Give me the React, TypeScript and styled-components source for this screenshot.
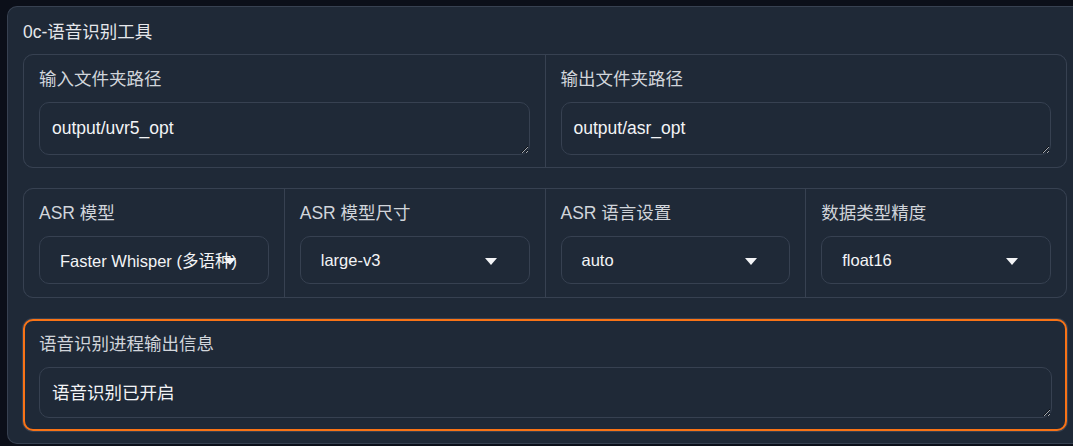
import React from "react";
import styled, { createGlobalStyle } from "styled-components";

const Global = createGlobalStyle`
  html, body { margin: 0; padding: 0; background: #0b0f19; overflow: hidden; }
  body { font-family: "Liberation Sans", "Noto Sans CJK SC", sans-serif; color-scheme: dark; }
  * { box-sizing: border-box; }
`;

const Page = styled.div`
  width: 1073px;
  height: 446px;
  padding: 6px 0 0 7px;
  overflow: hidden;
`;

const Panel = styled.div`
  width: 1076px;
  height: 438px;
  background: #1f2937;
  border: 1px solid #374151;
  border-right: none;
  border-radius: 10px 0 0 10px;
  padding: 12px 16px 0 15px;
  display: flex;
  flex-direction: column;
  gap: 20px;
`;

const Title = styled.div`
  font-size: 17.5px;
  line-height: 26px;
  color: #e5e7eb;
  height: 27px;
  margin-bottom: -12px;
`;

const Form = styled.div<{ $cols: number }>`
  display: grid;
  grid-template-columns: repeat(${(p) => p.$cols}, 1fr);
  gap: 1px;
  background: #374151;
  border: 1px solid #374151;
  border-radius: 10px;
  overflow: hidden;
`;

const Block = styled.div<{ $bottom?: number }>`
  background: #1f2937;
  padding: 12px 15px ${(p) => p.$bottom ?? 12}px 15px;
  display: flex;
  flex-direction: column;
  gap: 10px;
  min-width: 0;
`;

const Label = styled.div`
  font-size: 17.5px;
  line-height: 25px;
  color: #d1d5db;
  white-space: nowrap;
`;

const Area = styled.textarea<{ $h: number }>`
  display: block;
  width: 100%;
  height: ${(p) => p.$h}px;
  background: #1f2937;
  border: 1px solid #374151;
  border-radius: 10px;
  color: #f3f4f6;
  font-family: inherit;
  font-size: 17.5px;
  line-height: 26px;
  padding: 12px 12px;
  resize: vertical;
  outline: none;
  overflow: hidden;
`;

const Select = styled.div`
  position: relative;
  height: 48px;
  border: 1px solid #374151;
  border-radius: 10px;
  background: #1f2937;
  padding: 0 0 0 20px;
  display: flex;
  align-items: center;
`;

const SelectText = styled.span`
  font-size: 16.5px;
  color: #f3f4f6;
  white-space: nowrap;
`;

const Arrow = styled.svg`
  position: absolute;
  right: 32px;
  top: 50%;
  width: 12px;
  height: 7px;
  margin-top: -2px;
`;

const Status = styled.div`
  border: 2px solid #f97316;
  box-shadow: 0 0 0 1px #374151;
  border-radius: 10px;
  background: #1f2937;
  padding: 11px 13px 11px 14px;
  display: flex;
  flex-direction: column;
  gap: 10px;
  margin-top: 1px;
`;

const Dropdown = ({ value }: { value: string }) => (
  <Select>
    <SelectText>{value}</SelectText>
    <Arrow viewBox="0 0 12 7">
      <path d="M0 0 L12 0 L6 7 Z" fill="#f3f4f6" />
    </Arrow>
  </Select>
);

export default function App() {
  return (
    <>
      <Global />
      <Page>
        <Panel>
          <Title>0c-语音识别工具</Title>
          <Form $cols={2}>
            <Block>
              <Label>输入文件夹路径</Label>
              <Area $h={53} readOnly value="output/uvr5_opt" />
            </Block>
            <Block>
              <Label>输出文件夹路径</Label>
              <Area $h={53} readOnly value="output/asr_opt" />
            </Block>
          </Form>
          <Form $cols={4}>
            <Block $bottom={13}>
              <Label>ASR 模型</Label>
              <Dropdown value="Faster Whisper (多语种)" />
            </Block>
            <Block $bottom={13}>
              <Label>ASR 模型尺寸</Label>
              <Dropdown value="large-v3" />
            </Block>
            <Block $bottom={13}>
              <Label>ASR 语言设置</Label>
              <Dropdown value="auto" />
            </Block>
            <Block $bottom={13}>
              <Label>数据类型精度</Label>
              <Dropdown value="float16" />
            </Block>
          </Form>
          <Status>
            <Label>语音识别进程输出信息</Label>
            <Area $h={51} readOnly value="语音识别已开启" />
          </Status>
        </Panel>
      </Page>
    </>
  );
}
